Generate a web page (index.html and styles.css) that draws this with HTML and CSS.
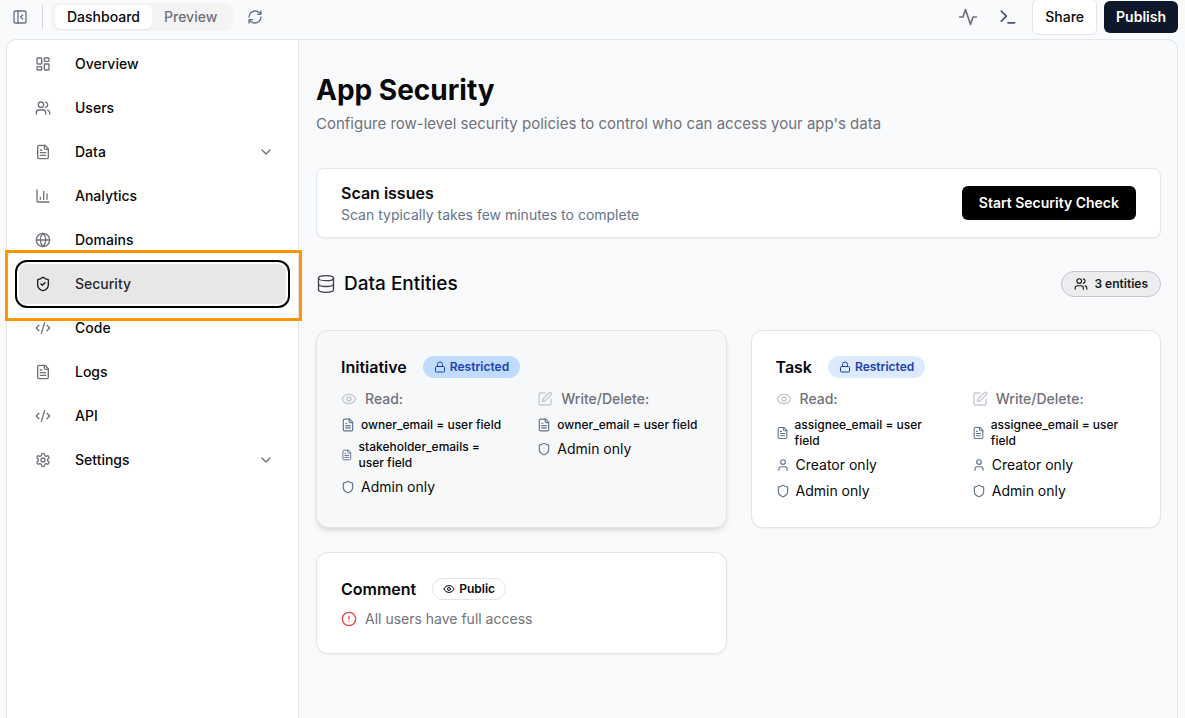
FILE: index.html
```html
<!DOCTYPE html>
<html lang="en">

<head>
    <meta charset="UTF-8">
    <meta name="viewport" content="width=device-width, initial-scale=1.0">
    <title>App Security</title>
    <link rel="stylesheet" href="styles.css">
</head>

<body>
    <!-- shared icons -->
    <svg class="sprite" aria-hidden="true">
        <symbol id="panel" viewBox="0 0 24 24"><rect x="3" y="3" width="18" height="18" rx="2" /><path d="M9 3v18M16 15l-3-3 3-3" /></symbol>
        <symbol id="refresh" viewBox="0 0 24 24"><path d="M3 12a9 9 0 0 1 9-9 9.75 9.75 0 0 1 6.74 2.74L21 8M21 3v5h-5M21 12a9 9 0 0 1-9 9 9.75 9.75 0 0 1-6.74-2.74L3 16M8 16H3v5" /></symbol>
        <symbol id="activity" viewBox="0 0 24 24"><path d="M22 12h-4l-3 9L9 3l-3 9H2" /></symbol>
        <symbol id="terminal" viewBox="0 0 24 24"><path d="M4 17l6-6-6-6M12 19h8" /></symbol>
        <symbol id="grid" viewBox="0 0 24 24"><rect x="3" y="3" width="7" height="9" rx="1" /><rect x="14" y="3" width="7" height="5" rx="1" /><rect x="14" y="12" width="7" height="9" rx="1" /><rect x="3" y="16" width="7" height="5" rx="1" /></symbol>
        <symbol id="users" viewBox="0 0 24 24"><path d="M16 21v-2a4 4 0 0 0-4-4H6a4 4 0 0 0-4 4v2" /><circle cx="9" cy="7" r="4" /><path d="M22 21v-2a4 4 0 0 0-3-3.87M16 3.13a4 4 0 0 1 0 7.75" /></symbol>
        <symbol id="file" viewBox="0 0 24 24"><path d="M15 2H6a2 2 0 0 0-2 2v16a2 2 0 0 0 2 2h12a2 2 0 0 0 2-2V7Z" /><path d="M14 2v4a2 2 0 0 0 2 2h4M10 9H8M16 13H8M16 17H8" /></symbol>
        <symbol id="chart" viewBox="0 0 24 24"><path d="M3 3v16a2 2 0 0 0 2 2h16M18 17V9M13 17V5M8 17v-3" /></symbol>
        <symbol id="globe" viewBox="0 0 24 24"><circle cx="12" cy="12" r="10" /><path d="M12 2a14.5 14.5 0 0 0 0 20 14.5 14.5 0 0 0 0-20M2 12h20" /></symbol>
        <symbol id="shield" viewBox="0 0 24 24"><path d="M20 13c0 5-3.5 7.5-7.66 8.95a1 1 0 0 1-.67-.01C7.5 20.5 4 18 4 13V6a1 1 0 0 1 1-1c2 0 4.5-1.2 6.24-2.72a1.17 1.17 0 0 1 1.52 0C14.51 3.81 17 5 19 5a1 1 0 0 1 1 1z" /></symbol>
        <symbol id="shield-check" viewBox="0 0 24 24"><path d="M20 13c0 5-3.5 7.5-7.66 8.95a1 1 0 0 1-.67-.01C7.5 20.5 4 18 4 13V6a1 1 0 0 1 1-1c2 0 4.5-1.2 6.24-2.72a1.17 1.17 0 0 1 1.52 0C14.51 3.81 17 5 19 5a1 1 0 0 1 1 1z" /><path d="M9 12l2 2 4-4" /></symbol>
        <symbol id="code" viewBox="0 0 24 24"><path d="M18 16l4-4-4-4M6 8l-4 4 4 4M14.5 4l-5 16" /></symbol>
        <symbol id="gear" viewBox="0 0 24 24"><path d="M12.22 2h-.44a2 2 0 0 0-2 2v.18a2 2 0 0 1-1 1.73l-.43.25a2 2 0 0 1-2 0l-.15-.08a2 2 0 0 0-2.73.73l-.22.38a2 2 0 0 0 .73 2.73l.15.1a2 2 0 0 1 1 1.72v.51a2 2 0 0 1-1 1.74l-.15.09a2 2 0 0 0-.73 2.73l.22.38a2 2 0 0 0 2.73.73l.15-.08a2 2 0 0 1 2 0l.43.25a2 2 0 0 1 1 1.73V20a2 2 0 0 0 2 2h.44a2 2 0 0 0 2-2v-.18a2 2 0 0 1 1-1.73l.43-.25a2 2 0 0 1 2 0l.15.08a2 2 0 0 0 2.73-.73l.22-.39a2 2 0 0 0-.73-2.73l-.15-.08a2 2 0 0 1-1-1.74v-.5a2 2 0 0 1 1-1.74l.15-.09a2 2 0 0 0 .73-2.73l-.22-.38a2 2 0 0 0-2.73-.73l-.15.08a2 2 0 0 1-2 0l-.43-.25a2 2 0 0 1-1-1.73V4a2 2 0 0 0-2-2z" /><circle cx="12" cy="12" r="3" /></symbol>
        <symbol id="chevron" viewBox="0 0 24 24"><path d="M6 9l6 6 6-6" /></symbol>
        <symbol id="database" viewBox="0 0 24 24"><ellipse cx="12" cy="5" rx="9" ry="3" /><path d="M3 5v14a9 3 0 0 0 18 0V5M3 12a9 3 0 0 0 18 0" /></symbol>
        <symbol id="lock" viewBox="0 0 24 24"><rect x="3" y="11" width="18" height="11" rx="2" /><path d="M7 11V7a5 5 0 0 1 10 0v4" /></symbol>
        <symbol id="eye" viewBox="0 0 24 24"><path d="M2.06 12.35a1 1 0 0 1 0-.7 10.75 10.75 0 0 1 19.88 0 1 1 0 0 1 0 .7 10.75 10.75 0 0 1-19.88 0" /><circle cx="12" cy="12" r="3" /></symbol>
        <symbol id="edit" viewBox="0 0 24 24"><path d="M12 3H5a2 2 0 0 0-2 2v14a2 2 0 0 0 2 2h14a2 2 0 0 0 2-2v-7" /><path d="M18.38 2.63a1 1 0 0 1 3 3l-9.01 9.01a2 2 0 0 1-.85.5l-2.87.84a.5.5 0 0 1-.62-.62l.84-2.87a2 2 0 0 1 .5-.85z" /></symbol>
        <symbol id="user" viewBox="0 0 24 24"><path d="M19 21v-2a4 4 0 0 0-4-4H9a4 4 0 0 0-4 4v2" /><circle cx="12" cy="7" r="4" /></symbol>
        <symbol id="alert" viewBox="0 0 24 24"><circle cx="12" cy="12" r="10" /><path d="M12 8v4M12 16h.01" /></symbol>
    </svg>

    <header class="topbar">
        <button class="icon-btn" aria-label="Toggle sidebar"><svg class="icon icon-md"><use href="#panel" /></svg></button>
        <span class="divider"></span>
        <div class="tabs">
            <button class="tab active">Dashboard</button>
            <button class="tab">Preview</button>
        </div>
        <button class="icon-btn refresh" aria-label="Refresh"><svg class="icon icon-md"><use href="#refresh" /></svg></button>
        <div class="actions">
            <button class="icon-btn activity" aria-label="Activity"><svg class="icon icon-lg"><use href="#activity" /></svg></button>
            <button class="icon-btn terminal" aria-label="Terminal"><svg class="icon icon-lg"><use href="#terminal" /></svg></button>
            <button class="btn share">Share</button>
            <button class="btn publish">Publish</button>
        </div>
    </header>

    <div class="panel">
        <nav class="sidebar">
            <a class="nav-item" href="#"><svg class="icon icon-md"><use href="#grid" /></svg>Overview</a>
            <a class="nav-item" href="#"><svg class="icon icon-md"><use href="#users" /></svg>Users</a>
            <a class="nav-item" href="#"><svg class="icon icon-md"><use href="#file" /></svg>Data<svg class="icon icon-md chevron"><use href="#chevron" /></svg></a>
            <a class="nav-item" href="#"><svg class="icon icon-md"><use href="#chart" /></svg>Analytics</a>
            <a class="nav-item" href="#"><svg class="icon icon-md"><use href="#globe" /></svg>Domains</a>
            <a class="nav-item current" href="#"><svg class="icon icon-md"><use href="#shield-check" /></svg>Security</a>
            <a class="nav-item" href="#"><svg class="icon icon-md"><use href="#code" /></svg>Code</a>
            <a class="nav-item" href="#"><svg class="icon icon-md"><use href="#file" /></svg>Logs</a>
            <a class="nav-item" href="#"><svg class="icon icon-md"><use href="#code" /></svg>API</a>
            <a class="nav-item" href="#"><svg class="icon icon-md"><use href="#gear" /></svg>Settings<svg class="icon icon-md chevron"><use href="#chevron" /></svg></a>
        </nav>

        <main class="content">
            <h1>App Security</h1>
            <p class="subtitle">Configure row-level security policies to control who can access your app's data</p>

            <section class="scan">
                <div>
                    <h2>Scan issues</h2>
                    <p>Scan typically takes few minutes to complete</p>
                </div>
                <button class="btn start">Start Security Check</button>
            </section>

            <div class="section-head">
                <h2><svg class="icon icon-lg"><use href="#database" /></svg>Data Entities</h2>
                <span class="count"><svg class="icon icon-sm"><use href="#users" /></svg>3 entities</span>
            </div>

            <div class="cards">
                <article class="card hovered">
                    <div class="card-head">
                        <h3>Initiative</h3>
                        <span class="badge restricted"><svg class="icon icon-xs"><use href="#lock" /></svg>Restricted</span>
                    </div>
                    <div class="rules">
                        <div>
                            <h4><svg class="icon icon-md"><use href="#eye" /></svg>Read:</h4>
                            <ul>
                                <li class="field"><svg class="icon icon-sm"><use href="#file" /></svg><span>owner_email = user field</span></li>
                                <li class="field"><svg class="icon icon-sm"><use href="#file" /></svg><span>stakeholder_emails = user field</span></li>
                                <li><svg class="icon icon-sm"><use href="#shield" /></svg><span>Admin only</span></li>
                            </ul>
                        </div>
                        <div>
                            <h4><svg class="icon icon-md"><use href="#edit" /></svg>Write/Delete:</h4>
                            <ul>
                                <li class="field"><svg class="icon icon-sm"><use href="#file" /></svg><span>owner_email = user field</span></li>
                                <li><svg class="icon icon-sm"><use href="#shield" /></svg><span>Admin only</span></li>
                            </ul>
                        </div>
                    </div>
                </article>

                <article class="card">
                    <div class="card-head">
                        <h3>Task</h3>
                        <span class="badge restricted"><svg class="icon icon-xs"><use href="#lock" /></svg>Restricted</span>
                    </div>
                    <div class="rules">
                        <div>
                            <h4><svg class="icon icon-md"><use href="#eye" /></svg>Read:</h4>
                            <ul>
                                <li class="field"><svg class="icon icon-sm"><use href="#file" /></svg><span>assignee_email = user field</span></li>
                                <li><svg class="icon icon-sm"><use href="#user" /></svg><span>Creator only</span></li>
                                <li><svg class="icon icon-sm"><use href="#shield" /></svg><span>Admin only</span></li>
                            </ul>
                        </div>
                        <div>
                            <h4><svg class="icon icon-md"><use href="#edit" /></svg>Write/Delete:</h4>
                            <ul>
                                <li class="field"><svg class="icon icon-sm"><use href="#file" /></svg><span>assignee_email = user field</span></li>
                                <li><svg class="icon icon-sm"><use href="#user" /></svg><span>Creator only</span></li>
                                <li><svg class="icon icon-sm"><use href="#shield" /></svg><span>Admin only</span></li>
                            </ul>
                        </div>
                    </div>
                </article>

                <article class="card">
                    <div class="card-head">
                        <h3>Comment</h3>
                        <span class="badge public"><svg class="icon icon-xs"><use href="#eye" /></svg>Public</span>
                    </div>
                    <p class="notice"><svg class="icon icon-md"><use href="#alert" /></svg>All users have full access</p>
                </article>
            </div>
        </main>
    </div>
</body>

</html>
```

FILE: styles.css
```css
* {
    box-sizing: border-box;
    margin: 0;
    padding: 0;
}

body {
    display: flex;
    flex-direction: column;
    min-height: 100vh;
    background: #f9fafc;
    color: #09090b;
    font-family: Inter, "Liberation Sans", sans-serif;
    font-size: 14px;
    line-height: 20px;
}

ul {
    list-style: none;
}

a {
    color: inherit;
    text-decoration: none;
}

button {
    border: none;
    background: none;
    color: inherit;
    font: inherit;
    cursor: pointer;
}

.sprite {
    display: none;
}

.icon {
    display: block;
    fill: none;
    stroke: currentColor;
    stroke-width: 2;
    stroke-linecap: round;
    stroke-linejoin: round;
}

.icon-xs {
    width: 12px;
    height: 12px;
}

.icon-sm {
    width: 14px;
    height: 14px;
}

.icon-md {
    width: 16px;
    height: 16px;
}

.icon-lg {
    width: 20px;
    height: 20px;
}

/* top bar */
.topbar {
    display: flex;
    align-items: center;
    height: 34px;
    margin-bottom: 5px;
    padding: 0 7px 0 12px;
}

.icon-btn {
    color: #64748b;
}

.divider {
    width: 1px;
    height: 24px;
    margin: 0 8px 0 14px;
    background: #d4d4d8;
}

.tabs {
    display: flex;
    padding: 2px 4px;
    border-radius: 8px;
    background: #f4f4f5;
}

.tab {
    padding: 2px 12px;
    border-radius: 6px;
    color: #71717a;
    font-weight: 500;
}

.tab.active {
    background: #fff;
    color: #09090b;
    box-shadow: 0 1px 2px rgba(0, 0, 0, 0.06);
}

.refresh {
    margin-left: 14px;
}

.actions {
    display: flex;
    align-items: center;
    margin-left: auto;
}

.activity {
    color: #71717a;
}

.terminal {
    margin: 0 14px 0 20px;
    color: #475569;
}

.btn {
    border-radius: 6px;
    font-weight: 600;
    white-space: nowrap;
}

.share {
    height: 36px;
    margin-right: 7px;
    padding: 0 12px;
    border: 1px solid #e2e4e9;
    background: #fff;
    font-weight: 500;
}

.publish {
    height: 32px;
    padding: 0 12px;
    background: #0f172a;
    color: #fff;
}

/* panel */
.panel {
    display: flex;
    flex: 1;
    margin: 0 7px 0 6px;
    border: 1px solid #e2e5ec;
    border-bottom: none;
    border-radius: 10px 10px 0 0;
}

.sidebar {
    display: flex;
    flex-direction: column;
    gap: 4px;
    flex: 0 0 292px;
    padding: 4px 12px;
    border-right: 1px solid #e2e5ec;
    border-radius: 10px 0 0 0;
    background: #fff;
}

.nav-item {
    display: flex;
    align-items: center;
    gap: 24px;
    height: 40px;
    padding: 0 12px 0 16px;
    border-radius: 8px;
    font-weight: 500;
}

.nav-item .icon {
    color: #71717a;
}

.nav-item .chevron {
    margin-left: auto;
}

.nav-item.current {
    position: relative;
    background: #e7e7e7;
    color: #27272a;
    box-shadow: 0 0 0 2px #fff, 0 0 0 4px #000;
}

.nav-item.current .icon {
    color: #18181b;
}

/* highlight frame round the current item */
.nav-item.current::after {
    content: "";
    position: absolute;
    inset: -14px -16px -17px -14px;
    border: 3px solid #ff9500;
}

.content {
    flex: 1;
    min-width: 0;
    padding: 32px 16px 32px 17px;
}

h1 {
    margin-bottom: 4px;
    font-size: 28px;
    font-weight: 700;
    line-height: 36px;
}

.subtitle {
    margin-bottom: 32px;
    color: #71717a;
    font-size: 15px;
    line-height: 24px;
}

.scan {
    display: flex;
    align-items: center;
    justify-content: space-between;
    margin-bottom: 32px;
    padding: 12px 24px;
    border: 1px solid #e2e8f0;
    border-radius: 8px;
    background: #fff;
    box-shadow: 0 1px 2px rgba(0, 0, 0, 0.05);
}

.scan h2 {
    font-size: 16px;
    font-weight: 600;
    line-height: 24px;
}

.scan p {
    color: #64748b;
}

.start {
    height: 34px;
    padding: 0 17px;
    background: #000;
    color: #fff;
}

.section-head {
    display: flex;
    align-items: center;
    justify-content: space-between;
    margin-bottom: 32px;
}

.section-head h2 {
    display: flex;
    align-items: center;
    gap: 8px;
    font-size: 19px;
    font-weight: 500;
    line-height: 28px;
}

.section-head h2 .icon {
    color: #3f3f46;
    stroke-width: 1.6;
}

.count,
.badge {
    display: flex;
    align-items: center;
    border: 1px solid transparent;
    border-radius: 999px;
    font-size: 12px;
    font-weight: 600;
    line-height: 16px;
}

.count {
    gap: 6px;
    padding: 4px 12px;
    border-color: #c4c5c9;
    background: #ededef;
    color: #18181b;
}

/* entity cards */
.cards {
    display: grid;
    grid-template-columns: repeat(2, minmax(0, 1fr));
    gap: 24px;
}

.card {
    padding: 24px;
    border: 1px solid #e4e4e7;
    border-radius: 12px;
    background: #fff;
    box-shadow: 0 1px 2px rgba(0, 0, 0, 0.05);
}

.card.hovered {
    background: #f7f8fa;
    box-shadow: 0 4px 6px -1px rgba(0, 0, 0, 0.1), 0 2px 4px -2px rgba(0, 0, 0, 0.1);
}

.card-head {
    display: flex;
    align-items: center;
    gap: 16px;
    margin-bottom: 8px;
}

.card-head h3 {
    font-size: 16px;
    font-weight: 600;
    line-height: 24px;
}

.badge {
    gap: 4px;
    padding: 2px 10px;
}

.restricted {
    background: #dbeafe;
    color: #1e40af;
}

.hovered .restricted {
    background: #bfdbfe;
}

.public {
    border-color: #e4e4e7;
}

.rules {
    display: grid;
    grid-template-columns: repeat(2, minmax(0, 1fr));
    gap: 32px;
    padding: 2px 0;
}

.rules h4 {
    display: flex;
    align-items: center;
    gap: 8px;
    margin-bottom: 8px;
    color: #71717a;
    font-size: 14px;
    font-weight: 500;
}

.rules h4 .icon {
    color: #c3c8d1;
}

.rules ul {
    display: flex;
    flex-direction: column;
    gap: 6px;
}

.rules li {
    display: flex;
    align-items: center;
    gap: 6px;
}

.rules li .icon {
    color: #64748b;
}

.rules .field {
    font-size: 12px;
    font-weight: 500;
    line-height: 16px;
}

.notice {
    display: flex;
    align-items: center;
    gap: 8px;
    color: #71717a;
}

.notice .icon {
    color: #ef4444;
}
```
